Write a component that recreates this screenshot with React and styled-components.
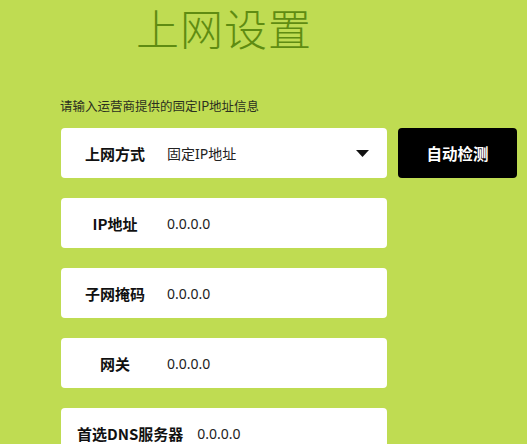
import styled, { createGlobalStyle } from "styled-components";

const GlobalStyle = createGlobalStyle`
  html, body {
    margin: 0;
    padding: 0;
    background: #bfdc52;
  }
  body {
    font-family: "Noto Sans", "Noto Sans CJK SC", sans-serif;
    color: #1a1a1a;
  }
`;

const Page = styled.div`
  width: 527px;
  height: 444px;
  overflow: hidden;
  padding: 0 0 0 61px;
  box-sizing: border-box;
  background: #bfdc52;
`;

const Title = styled.h1`
  width: 326px;
  margin: 0;
  padding-top: 1px;
  text-align: center;
  font-family: "Noto Sans CJK SC", sans-serif;
  font-size: 43px;
  font-weight: 300;
  line-height: 52px;
  letter-spacing: 1px;
  color: #5f8c12;
`;

const Hint = styled.p`
  margin: 45px 0 14px -1px;
  font-family: "Noto Sans CJK SC", sans-serif;
  font-size: 12.5px;
  line-height: 16px;
  color: #2b2f20;
`;

const Form = styled.div`
  display: flex;
  flex-direction: column;
  gap: 20px;
`;

const Row = styled.div`
  display: flex;
  gap: 11px;
`;

const Field = styled.div`
  display: flex;
  align-items: center;
  width: 326px;
  height: 50px;
  flex-shrink: 0;
  background: #fff;
  border-radius: 4px;
  box-sizing: border-box;
  padding-right: 17px;
`;

const Label = styled.span`
  min-width: 76px;
  padding: 0 16px 0 16px;
  text-align: center;
  white-space: nowrap;
  font-family: "Noto Sans CJK SC", sans-serif;
  font-weight: 700;
  font-size: 15px;
  color: #111;
`;

const Value = styled.span`
  flex: 1;
  margin-left: -2px;
  font-family: "Noto Sans", "Noto Sans CJK SC", sans-serif;
  font-size: 14px;
  color: #222;
`;

const Caret = styled.svg`
  width: 13px;
  height: 7px;
  flex-shrink: 0;
  margin-right: 1px;
`;

const DetectButton = styled.button`
  width: 119px;
  height: 50px;
  border: none;
  border-radius: 4px;
  background: #000;
  color: #fff;
  font-family: "Noto Sans CJK SC", sans-serif;
  font-weight: 700;
  font-size: 15.5px;
  cursor: pointer;
`;

const fields = [
  { label: "IP地址", value: "0.0.0.0" },
  { label: "子网掩码", value: "0.0.0.0" },
  { label: "网关", value: "0.0.0.0" },
  { label: "首选DNS服务器", value: "0.0.0.0" },
];

export default function App() {
  return (
    <>
      <GlobalStyle />
      <Page>
        <Title>上网设置</Title>
        <Hint>请输入运营商提供的固定IP地址信息</Hint>
        <Form>
          <Row>
            <Field>
              <Label>上网方式</Label>
              <Value>固定IP地址</Value>
              <Caret viewBox="0 0 13 7">
                <path d="M0 0 H13 L6.5 7 Z" fill="#111" />
              </Caret>
            </Field>
            <DetectButton>自动检测</DetectButton>
          </Row>
          {fields.map((f) => (
            <Row key={f.label}>
              <Field>
                <Label>{f.label}</Label>
                <Value>{f.value}</Value>
              </Field>
            </Row>
          ))}
        </Form>
      </Page>
    </>
  );
}
